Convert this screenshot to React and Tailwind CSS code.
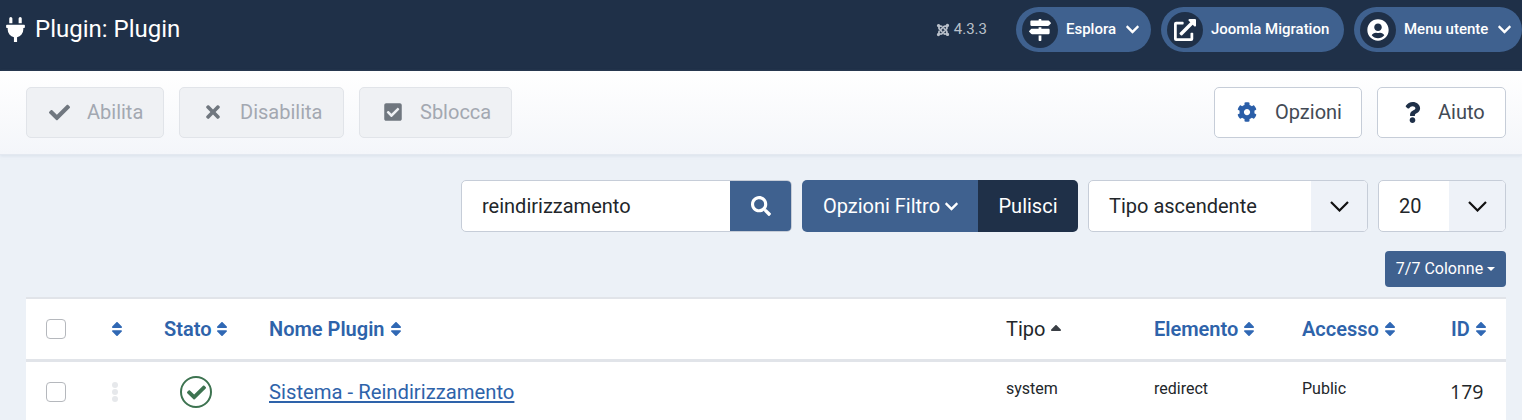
import React from "react";
import { FaPlug, FaCheck, FaTimes, FaCheckSquare, FaCog, FaQuestion, FaSearch, FaChevronDown, FaMapSigns, FaExternalLinkAlt, FaUserCircle, FaJoomla, FaSort, FaSortUp } from "react-icons/fa";

function Pill({ icon, label, chevron, className }) {
  return (
    <div className={`flex h-[45px] items-center rounded-full bg-[#3f618f] pl-[6px] text-white ${className}`}>
      <span className="flex h-[36px] w-[36px] shrink-0 items-center justify-center rounded-full bg-[#1f3048] text-[22px]">{icon}</span>
      <span className="ml-[8px] text-[15px] font-medium">{label}</span>
      {chevron && <FaChevronDown className="ml-[9px] text-[15px]" />}
    </div>
  );
}

function ToolButton({ icon, label, className, disabled }) {
  return (
    <div className={`flex h-[51px] items-center rounded-[5px] border text-[20px] ${disabled ? "border-[#e1e4e9] bg-[#eff1f4] text-[#a3a8b1]" : "border-[#c6cdd8] bg-white text-[#434a55]"} ${className}`}>
      {icon}
      <span>{label}</span>
    </div>
  );
}

function SortHead({ children }) {
  return (
    <span className="flex items-center gap-[2px] text-[20px] leading-none font-semibold text-[#2e63aa]">
      {children}
      <FaSort className="text-[18px] text-[#3068b4]" />
    </span>
  );
}

function Check() {
  return <span className="block h-[20px] w-[20px] rounded-[4px] border border-[#b5b8bd] bg-white" />;
}

const cols = "grid grid-cols-[65px_53px_105px_737px_148px_148px_149px_1fr] items-center pl-5";
const Chevron = () => (
  <svg width="19" height="11" viewBox="0 0 19 11" fill="none" stroke="#111" strokeWidth="2.2"><path d="M1 1l8.500 8.500 8.500-8.500" /></svg>
);

export default function App() {
  return (
    <div className="h-[420px] overflow-hidden bg-[#ecf1f7] font-['Roboto',sans-serif] text-[#22262a]">
      <header className="flex h-[71px] items-start bg-[#1f3048] text-white">
        <div className="flex h-[58px] items-center pl-[3px]">
          <FaPlug className="text-[25px]" />
          <h1 className="ml-[7px] text-[24px] leading-none">Plugin: Plugin</h1>
        </div>
        <div className="ml-auto flex h-[59px] items-center">
          <span className="mr-[29px] flex items-center gap-[4px] text-[15px] text-[#b9c0ca]">
            <FaJoomla className="text-[14px]" />
            4.3.3
          </span>
          <Pill className="mr-[10px] w-[135px]" icon={<FaMapSigns />} label="Esplora" chevron />
          <Pill className="mr-[10px] w-[183px]" icon={<FaExternalLinkAlt />} label="Joomla Migration" />
          <Pill className="w-[168px]" icon={<FaUserCircle />} label="Menu utente" chevron />
        </div>
      </header>

      <div className="flex h-[84px] items-center justify-between border-b border-[#e3e8f0] bg-linear-to-b from-white to-[#f4f6fa] pl-[26px] pr-[16px] pb-[1px] shadow-[0_1px_3px_rgba(180,195,215,0.35)]">
        <div className="flex gap-[15px]">
          <ToolButton disabled className="w-[138px] pl-[22px]" icon={<FaCheck className="mr-[17px] text-[21px] text-[#70777f]" />} label="Abilita" />
          <ToolButton disabled className="w-[165px] pl-[23px]" icon={<FaTimes className="mr-[17px] text-[20px] text-[#70777f]" />} label="Disabilita" />
          <ToolButton disabled className="w-[153px] pl-[23px]" icon={<FaCheckSquare className="mr-[17px] text-[20px] text-[#70777f]" />} label="Sblocca" />
        </div>
        <div className="flex gap-[15px]">
          <ToolButton className="w-[148px] pl-[22px]" icon={<FaCog className="mr-[18px] text-[20px] text-[#2a5ea8]" />} label="Opzioni" />
          <ToolButton className="w-[129px] pl-[24px]" icon={<FaQuestion className="mr-[15px] text-[21px] text-[#1f3048]" />} label="Aiuto" />
        </div>
      </div>

      <div className="mt-[25px] flex justify-end gap-[10px] pr-[16px] text-[20px]">
        <div className="flex h-[52px] w-[331px] overflow-hidden rounded-[5px] border border-[#c6cdd8] bg-white">
          <span className="flex flex-1 items-center pl-[20px] text-[#22262a]">reindirizzamento</span>
          <span className="-my-px -mr-px flex w-[62px] items-center justify-center bg-[#3f618f] text-[20px] text-white"><FaSearch /></span>
        </div>
        <div className="flex h-[52px] w-[276px] overflow-hidden rounded-[5px] text-white">
          <span className="flex w-[176px] items-center justify-center gap-[4px] bg-[#3f618f] pl-[2px]">Opzioni Filtro <FaChevronDown className="text-[15px]" /></span>
          <span className="flex flex-1 items-center justify-center bg-[#1f3048]">Pulisci</span>
        </div>
        <div className="flex h-[52px] w-[280px] overflow-hidden rounded-[5px] border border-[#c6cdd8] bg-white">
          <span className="flex flex-1 items-center pl-[20px]">Tipo ascendente</span>
          <span className="flex w-[56px] items-center justify-center bg-[#eef2f8]"><Chevron /></span>
        </div>
        <div className="flex h-[52px] w-[128px] overflow-hidden rounded-[5px] border border-[#c6cdd8] bg-white">
          <span className="flex flex-1 items-center pl-[20px]">20</span>
          <span className="flex w-[56px] items-center justify-center bg-[#eef2f8]"><Chevron /></span>
        </div>
      </div>

      <div className="mt-[19px] flex justify-end pr-[16px]">
        <span className="flex h-[36px] w-[121px] items-center justify-center gap-[4px] rounded-[4px] bg-[#3f618f] text-[16px] text-white">
          7/7 Colonne
          <span className="h-0 w-0 border-x-[4px] border-t-[4px] border-x-transparent border-t-white" />
        </span>
      </div>

      <div className="mt-[10px] mr-[16px] ml-[26px] border-t-[2px] border-[#e1e4e9] bg-white">
        <div className={`${cols} box-content h-[60px] border-b-[3px] border-[#e1e4e9]`}>
          <Check />
          <FaSort className="ml-[-3px] text-[18px] text-[#3068b4]" />
          <SortHead>Stato</SortHead>
          <SortHead>Nome Plugin</SortHead>
          <span className="flex items-center gap-[2px] text-[20px] leading-none font-normal text-[#22262a]">Tipo <FaSortUp className="mt-[6px] text-[18px] text-[#3a3f45]" /></span>
          <SortHead>Elemento</SortHead>
          <SortHead>Accesso</SortHead>
          <SortHead>ID</SortHead>
        </div>
        <div className={`${cols} h-[60px]`}>
          <Check />
          <span className="ml-[1px] flex flex-col gap-[1px]">
            <span className="h-[6px] w-[6px] rounded-full bg-[#e6e8eb]" />
            <span className="h-[6px] w-[6px] rounded-full bg-[#e6e8eb]" />
            <span className="h-[6px] w-[6px] rounded-full bg-[#e6e8eb]" />
          </span>
          <span className="ml-[16px] flex h-[32px] w-[32px] items-center justify-center rounded-full border-2 border-[#3d7350] text-[#3d7350]"><FaCheck className="text-[19px]" /></span>
          <span className="text-[20.25px] text-[#2e63aa] underline">Sistema - Reindirizzamento</span>
          <span className="-mt-[7px] text-[16px]">system</span>
          <span className="-mt-[7px] text-[16px]">redirect</span>
          <span className="-mt-[7px] text-[16px]">Public</span>
          <span className="-mt-[1px] -ml-[1px] font-['Open_Sans',sans-serif] text-[19.5px]">179</span>
        </div>
      </div>
    </div>
  );
}
